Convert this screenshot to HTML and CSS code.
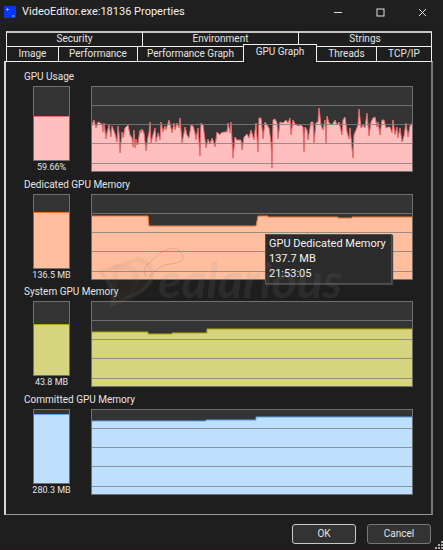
FILE: index.html
```
<!DOCTYPE html>
<html lang="en">
<head>
<meta charset="utf-8">
<title>VideoEditor.exe:18136 Properties</title>
<link rel="stylesheet" href="styles.css">
</head>
<body>
<div class="window">
  <header class="titlebar">
    <svg class="app-icon" viewBox="0 0 12 12" aria-hidden="true"><rect width="12" height="12" rx="1" fill="#0b35f5"/><path d="M3.500 1.500L4 3L5.500 3.500L4 4L3.500 5.500L3 4L1.500 3.500L3 3Z" fill="#b9caff"/><path d="M8 10h2.500" stroke="#a9bcff"/></svg>
    <h1 class="title">VideoEditor.exe:18136 Properties</h1>
    <button class="win-btn" aria-label="Minimize"><svg viewBox="0 0 9 9"><path d="M0 4.500h8"/></svg></button>
    <button class="win-btn" aria-label="Maximize"><svg viewBox="0 0 9 9"><rect x="1" y="1" width="7" height="7"/></svg></button>
    <button class="win-btn" aria-label="Close"><svg viewBox="0 0 9 9"><path d="M1 1l7 7M8 1l-7 7"/></svg></button>
  </header>

  <nav class="tabs" role="tablist">
    <div class="tab-row tab-row-back">
      <button class="tab" role="tab">Security</button>
      <button class="tab" role="tab">Environment</button>
      <button class="tab" role="tab">Strings</button>
    </div>
    <div class="tab-row tab-row-front">
      <button class="tab" role="tab">Image</button>
      <button class="tab" role="tab">Performance</button>
      <button class="tab" role="tab">Performance Graph</button>
      <button class="tab tab-selected" role="tab" aria-selected="true">GPU Graph</button>
      <button class="tab" role="tab">Threads</button>
      <button class="tab" role="tab">TCP/IP</button>
    </div>
  </nav>

  <main class="panel">
    <section class="metric usage">
      <h2 class="metric-name">GPU Usage</h2>
      <div class="gauge">
        <div class="meter"><div class="level" style="height:60%"></div></div>
        <span class="value">59.66%</span>
      </div>
      <svg class="graph" viewBox="0 0 322 86" preserveAspectRatio="none">
        <path class="area" d="M-2 90L-2 41L0 41 3 34 5 42 7 36 11 38 12 46 13 37 15 53 16 47 18 39 20 51 21 40 24 48 26 56 27 40 28 47 29 67 31 46 32 52 34 42 37 39 39 49 41 52 42 61 43 44 44 62 45 53 46 59 47 57 49 44 50 47 51 43 53 47 55 65 57 51 58 47 59 36 60 57 62 49 64 42 65 56 67 47 69 54 70 36 72 46 74 40 75 44 78 34 80 42 81 47 83 37 84 44 86 37 88 42 89 32 91 57 93 47 94 41 96 49 98 52 100 39 102 40 104 47 105 54 107 42 109 70 110 37 112 39 114 54 115 62 117 53 119 58 121 52 123 57 124 61 126 46 129 49 130 47 133 46 136 46 137 37 139 47 140 36 141 54 142 72 144 51 146 54 150 54 151 64 153 51 156 48 158 52 160 44 163 54 165 37 167 66 168 32 170 32 172 53 174 36 176 39 178 42 180 56 181 82 182 34 184 33 186 37 187 53 189 36 192 37 195 34 197 37 199 32 200 49 202 34 204 38 207 40 210 39 212 41 213 66 214 41 216 44 217 54 220 36 222 36 223 57 225 37 227 36 228 22 230 39 232 44 234 34 235 57 236 30 238 37 241 39 244 34 246 39 248 36 251 49 252 34 254 31 256 46 258 53 259 42 262 72 263 49 265 44 267 39 268 23 270 42 272 39 274 42 276 27 277 39 278 50 280 36 282 32 284 31 286 41 287 36 289 49 291 34 293 34 295 42 297 41 299 41 301 47 302 34 304 49 306 41 307 52 309 42 311 56 313 50 315 37 317 51 319 40 322 36L326 36V90Z"/>
        <path class="lines" d="M0 19.500H322M0 38.500H322M0 57.500H322M0 77.500H322"/><rect class="frame" x=".5" y=".5" width="321" height="85"/>
      </svg>
    </section>

    <section class="metric dedicated">
      <h2 class="metric-name">Dedicated GPU Memory</h2>
      <div class="gauge">
        <div class="meter"><div class="level" style="height:77%"></div></div>
        <span class="value">136.5 MB</span>
      </div>
      <svg class="graph" viewBox="0 0 322 86" preserveAspectRatio="none">
        <path class="area" d="M-2 90V22H57L58 32H165L167 22H177V23H247V24H261V23H326V90Z"/>
        <path class="lines" d="M0 19.500H322M0 38.500H322M0 57.500H322M0 77.500H322"/><rect class="frame" x=".5" y=".5" width="321" height="85"/>
      </svg>
      <div class="tooltip" role="tooltip">GPU Dedicated Memory<br>137.7 MB<br>21:53:05</div>
      <svg class="watermark" viewBox="0 0 260 76" aria-hidden="true">
        <path class="tag" d="M10 30L47 17Q64 21 62 35Q60 50 22 62L24 52L17 38Z"/>
        <path class="string" d="M57 35Q50 28 60 20Q79 1 89 8Q100 20 80 22Q69 23 59 35"/>
        <text class="mark-initial" x="18" y="56">D</text>
        <text class="mark-text" x="68" y="56">ealarious</text>
      </svg>
    </section>

    <section class="metric system">
      <h2 class="metric-name">System GPU Memory</h2>
      <div class="gauge">
        <div class="meter"><div class="level" style="height:70%"></div></div>
        <span class="value">43.8 MB</span>
      </div>
      <svg class="graph" viewBox="0 0 322 86" preserveAspectRatio="none">
        <path class="area" d="M-2 90V31H57V33H81V32H116V28H326V90Z"/>
        <path class="lines" d="M0 19.500H322M0 38.500H322M0 57.500H322M0 77.500H322"/><rect class="frame" x=".5" y=".5" width="321" height="85"/>
      </svg>
    </section>

    <section class="metric committed">
      <h2 class="metric-name">Committed GPU Memory</h2>
      <div class="gauge">
        <div class="meter"><div class="level" style="height:94%"></div></div>
        <span class="value">280.3 MB</span>
      </div>
      <svg class="graph" viewBox="0 0 322 86" preserveAspectRatio="none">
        <path class="area" d="M-2 90V12H115V11H165V8H326V90Z"/>
        <path class="lines" d="M0 19.500H322M0 38.500H322M0 57.500H322M0 77.500H322"/><rect class="frame" x=".5" y=".5" width="321" height="85"/>
      </svg>
    </section>
  </main>

  <footer class="actions">
    <button class="btn btn-default">OK</button>
    <button class="btn">Cancel</button>
  </footer>
  <svg class="grip" viewBox="0 0 8 8" aria-hidden="true"><path d="M6 0h2v2h-2zM3 3h2v2h-2zM6 3h2v2h-2zM0 6h2v2h-2zM3 6h2v2h-2zM6 6h2v2h-2z"/></svg>
</div>
</body>
</html>
```
FILE: styles.css
```
* { box-sizing: border-box; }
body {
  margin: 0;
  background: #1e1e1e;
  color: #e4e4e4;
  font: 10px/14px Roboto, "Noto Sans", sans-serif;
}
button { font: inherit; color: inherit; background: none; border: 0; padding: 0; margin: 0; }
h1, h2 { margin: 0; font-weight: 400; }
.window {
  position: relative;
  display: flex;
  flex-direction: column;
  min-height: 100vh;
  border-bottom: 1px solid #2b1719;
}

.titlebar { display: flex; align-items: center; height: 24px; padding-left: 4px; background: #202020; }
.app-icon { width: 12px; height: 12px; }
.title { flex: 1; margin-left: 6px; font-size: 11px; line-height: 16px; color: #f0f0f0; white-space: nowrap; }
.win-btn { display: grid; place-items: center; width: 42px; height: 24px; }
.win-btn svg { width: 9px; height: 9px; fill: none; stroke: #e0e0e0; }

.tabs { margin: 7px 11px 0 6px; }
.tab-row { display: grid; }
.tab-row-back { grid-template-columns: 137fr 156fr 133fr; }
.tab-row-front { grid-template-columns: 53fr 79fr 106fr 73fr 60fr 55fr; }
.tab {
  height: 15px;
  padding-bottom: 2px;
  line-height: 11px;
  border-top: 2px solid #c4c4c4;
  border-right: 1px solid #f0f0f0;
  white-space: nowrap;
}
.tab:first-child { border-left: 1px solid #f0f0f0; }
.tab-row-front .tab { border-top: 1px solid #f0f0f0; }
.tab-row-front .tab-selected {
  height: 18px;
  margin: -2px 0 -1px -1px;
  padding-bottom: 4px;
  border-left: 1px solid #f0f0f0;
  background: #1e1e1e;
  z-index: 1;
}

.panel {
  display: grid;
  grid-template-rows: 108px 107px 108px 108px;
  margin: 0 10px 0 4px;
  padding: 9px 18px 12px;
  border: 2px solid #777;
  border-top: 1px solid #f0f0f0;
  border-left-color: #d8d8d8;
  border-bottom: 1px solid #999;
}
.metric {
  position: relative;
  display: grid;
  grid-template-columns: 37px 1fr;
  grid-template-rows: 15px 86px;
  column-gap: 21px;
  padding-left: 9px;
}
.metric-name { grid-column: 1 / 3; margin-left: -9px; font-size: 10px; line-height: 12px; }
.gauge { display: flex; flex-direction: column; align-items: center; }
.meter {
  display: flex;
  flex: none;
  flex-direction: column;
  justify-content: flex-end;
  width: 37px;
  height: 75px;
  border: 1px solid #707070;
  background: #343434;
}
.level { background: var(--fill); border-top: 1px solid var(--line); }
.value { font-size: 9px; line-height: 13px; white-space: nowrap; }
.graph { width: 100%; height: 86px; background: #343434; }
.area { fill: var(--fill); stroke: var(--line); }
.lines { fill: none; stroke: #808080; stroke-opacity: .8; }
.frame { fill: none; stroke: #707070; }

.usage { --fill: #ffbfbf; --line: #e96b6b; }
.dedicated { --fill: #ffbf9f; --line: #ef7535; z-index: 1; }
.system { --fill: #d5d580; --line: #b0aa00; }
.committed { --fill: #bfdfff; --line: #5aa5ee; }

.tooltip {
  position: absolute;
  left: 241px;
  top: 55px;
  width: 127px;
  padding: 1px 3px 2px;
  border: 1px solid #505050;
  background: #2b2b2b;
  box-shadow: 1px 1px 1px #444;
  color: #f2f2f2;
  font-size: 11px;
  line-height: 15px;
  white-space: nowrap;
}
.watermark { position: absolute; left: 66px; top: 63px; width: 260px; height: 76px; pointer-events: none; }
.tag { fill: #ae9677; fill-opacity: .06; stroke: #a48b6c; stroke-width: 4; stroke-opacity: .12; }
.string { fill: none; stroke: #8d7560; stroke-opacity: .3; }
.mark-initial { font: italic 700 46px Lato, sans-serif; fill: #7b7366; fill-opacity: .08; }
.mark-text { font: italic 700 48px Lato, sans-serif; fill: #8c8a87; fill-opacity: .15; }

.actions { display: flex; justify-content: flex-end; gap: 11px; padding: 9px 12px 5px 0; }
.btn { width: 64px; height: 20px; border: 1px solid #777; border-radius: 3px; background: #333; line-height: 16px; }
.btn-default { border-color: #c8c8c8; }
.grip { position: absolute; right: 0; bottom: 0; width: 8px; height: 8px; fill: #aaa; }
```
